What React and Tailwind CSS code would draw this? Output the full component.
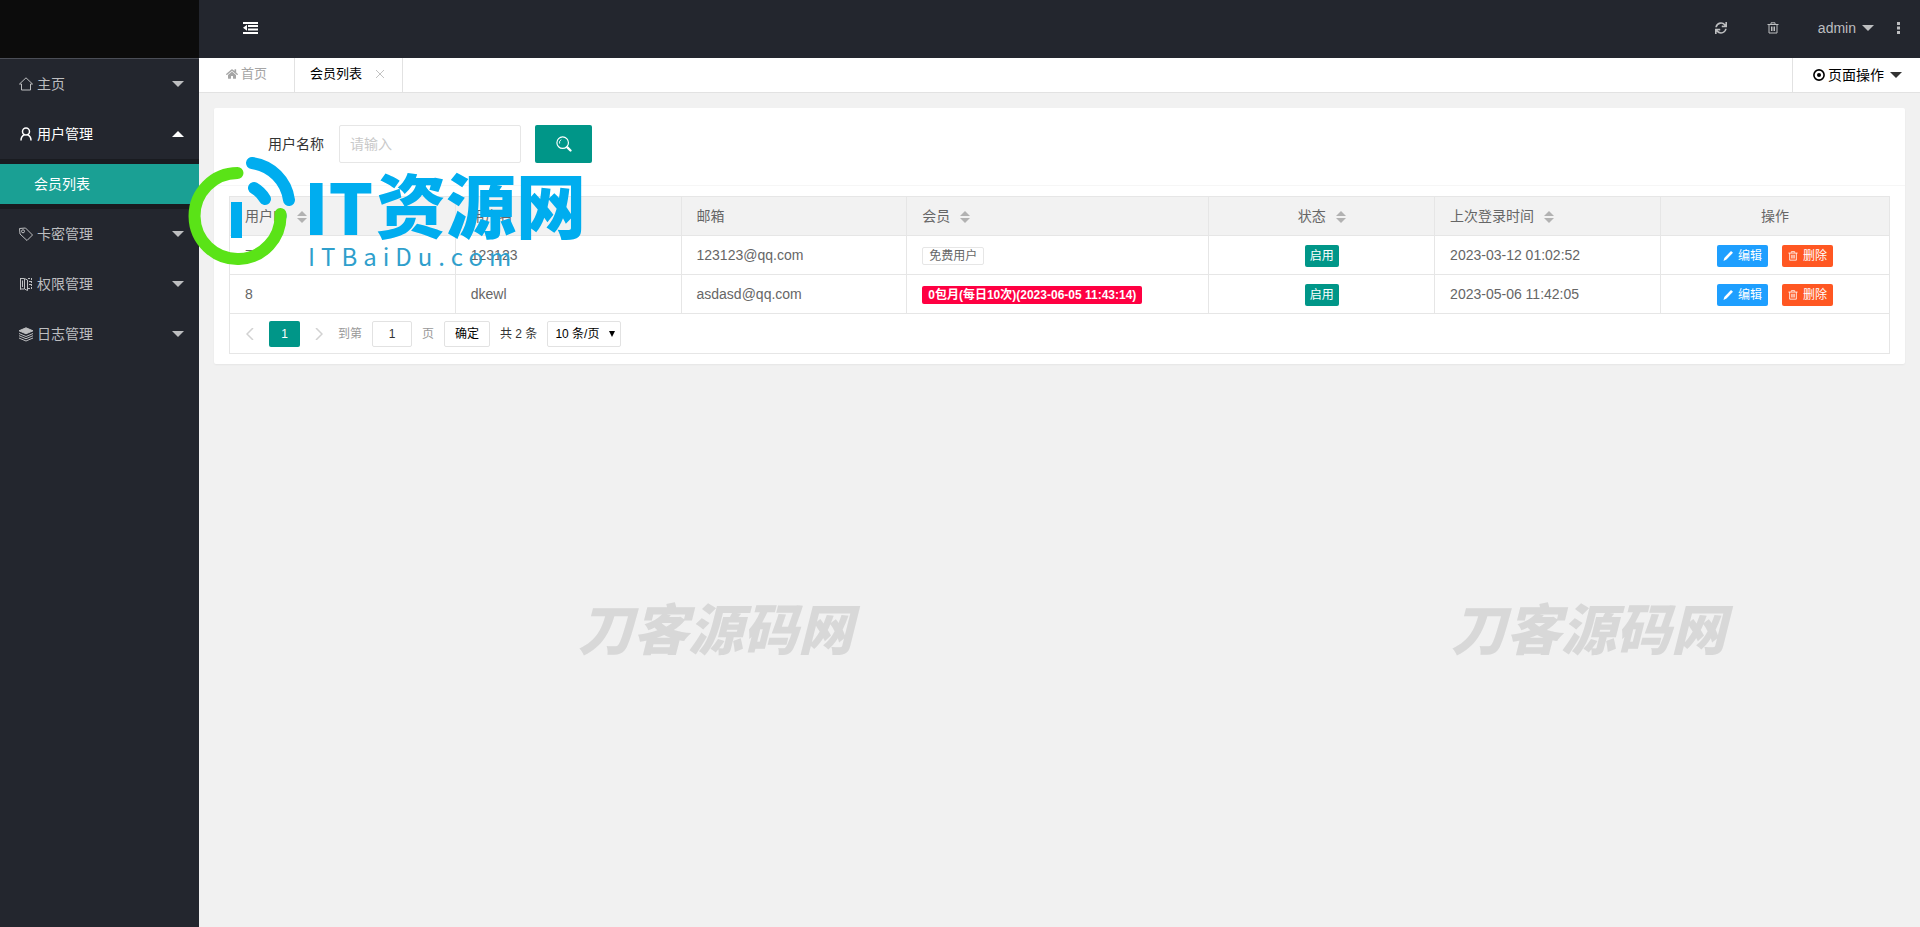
import { Fragment } from "react";
import { FaHome, FaSync } from "react-icons/fa";

const CaretDown = ({ className = "" }) => (
  <span className={`inline-block border-x-6 border-t-6 border-x-transparent ${className}`} />
);

// Icons

const HouseIcon = () => (
  <svg viewBox="0 0 16 16" className="size-4" fill="none" stroke="currentColor">
    <path d="M3.500 8H1.500L8 1.800 14.500 8h-2v6h-9V8" />
  </svg>
);

const UserIcon = () => (
  <svg viewBox="0 0 16 16" className="size-4" fill="none" stroke="currentColor" strokeWidth="1.500">
    <circle cx="8" cy="5.500" r="3.500" />
    <path d="M3 14.500c0-3 1.500-5 3.500-6M13 14.500c0-3-1.500-5-3.500-6" />
  </svg>
);

const TagIcon = () => (
  <svg viewBox="0 0 16 16" className="size-4" fill="none" stroke="currentColor" strokeLinejoin="round">
    <path d="M1.500 2.500 7.500 2 14.500 9 9 14.500 2 8Z" />
    <circle cx="5" cy="5.300" r="1.500" />
  </svg>
);

const BookIcon = () => (
  <svg viewBox="0 0 16 16" className="size-4" fill="none" stroke="currentColor">
    <path d="M2.500 2v11.500M2 2.500h4M2 13h4M6.500 2.500 9.500 4v10.500L6.500 13ZM4.500 4.500v6.500" />
    <path d="M10 2.500h4M11 5.500h3M11 8.500h3M10 12.500h4M13.500 2v11" strokeDasharray="2 1" />
  </svg>
);

const LayersIcon = () => (
  <svg viewBox="0 0 16 16" className="size-4" fill="none" stroke="currentColor">
    <path d="m8 1.800 7 3-7 3-7-3Z" fill="currentColor" />
    <path d="m1 7.500 7 3 7-3M1 9.700l7 3 7-3M1 12l7 3 7-3" />
  </svg>
);

const TrashIcon = ({ className = "size-3" }) => (
  <svg viewBox="0 0 12 12" className={className} fill="none" stroke="currentColor">
    <path d="M.5 2.500h11M4 2V.8h4V2M2 2.500v8.500h8V2.500M4.500 4.500v4.500M6 4.500v4.500M7.500 4.500v4.500" />
  </svg>
);

const MENU = [
  { title: "主页", icon: HouseIcon },
  { title: "用户管理", icon: UserIcon, children: ["会员列表"] },
  { title: "卡密管理", icon: TagIcon },
  { title: "权限管理", icon: BookIcon },
  { title: "日志管理", icon: LayersIcon },
];

const COLUMNS = [
  { title: "用户ID", sort: true, width: "w-[13.6%]" },
  { title: "用户名", width: "w-[13.6%]" },
  { title: "邮箱", width: "w-[13.6%]" },
  { title: "会员", sort: true, width: "w-[18.2%]" },
  { title: "状态", sort: true, center: true, width: "w-[13.6%]" },
  { title: "上次登录时间", sort: true, width: "w-[13.6%]" },
  { title: "操作", center: true, width: "w-[13.8%]" },
];

const USERS = [
  { id: 7, name: "123123", email: "123123@qq.com", vip: null, time: "2023-03-12 01:02:52" },
  { id: 8, name: "dkewl", email: "asdasd@qq.com", vip: "0包月(每日10次)(2023-06-05 11:43:14)", time: "2023-05-06 11:42:05" },
];

const Sidebar = () => (
  <aside className="w-[199px] shrink-0 bg-[#23262e] text-[#bdbec0]">
    <div className="h-[59px] border-b border-[#4b4e57] bg-[#0c0c0c]" />
    <nav>
      {MENU.map(({ title, icon: Icon, children }) => (
        <Fragment key={title}>
          <a
            href="#"
            className={`flex h-[50px] items-center pr-[15px] pl-[18px] ${children ? "text-white" : ""}`}
          >
            <Icon />
            <span className="ml-[3px] flex-1">{title}</span>
            <CaretDown className={children ? "rotate-180" : ""} />
          </a>
          {children && (
            <div className="bg-[#191b20] py-[5px]">
              {children.map((name) => (
                <a key={name} href="#" className="flex h-10 items-center bg-[#1aa094] pl-[34px] text-white">
                  {name}
                </a>
              ))}
            </div>
          )}
        </Fragment>
      ))}
    </nav>
  </aside>
);

const Header = () => (
  <header className="flex h-[58px] items-center bg-[#23262e] pb-[2px] text-[#bdbec0]">
    <button type="button" aria-label="收起菜单" className="ml-[43px] text-white">
      <svg viewBox="0 0 16 12" className="h-3 w-4" fill="currentColor">
        <path d="M1 0h15v2H1zM6 3h10v2H6zM6 6.500h10v2H6zM1 10h15v2H1zM1 5.800l4-3v6z" />
      </svg>
    </button>
    <div className="ml-auto flex items-center pr-[19px]">
      <button type="button" aria-label="刷新">
        <FaSync className="size-3" />
      </button>
      <button type="button" aria-label="清理缓存" className="ml-10">
        <TrashIcon />
      </button>
      <button type="button" className="ml-[39px] flex items-center gap-[6px]">
        admin
        <CaretDown />
      </button>
      <button type="button" aria-label="更多" className="ml-[23px]">
        <svg viewBox="0 0 4 12" className="h-3 w-1" fill="currentColor">
          <path d="M0 0h3v3H0zM0 4.500h3v3H0zM0 9h3v3H0z" />
        </svg>
      </button>
    </div>
  </header>
);

const TabBar = () => (
  <div className="flex h-[35px] border-b border-[#e2e2e2] bg-white text-black">
    <a href="#" className="flex w-24 items-center justify-center gap-[3px] border-r border-[#e2e2e2] pb-[2px] text-[13px] text-[#a5a5a5]">
      <FaHome className="size-3" />
      首页
    </a>
    <a href="#" className="flex items-center border-r border-[#e2e2e2] pr-[18px] pb-[2px] pl-[15px] text-[13px]">
      会员列表
      <svg viewBox="0 0 8 8" className="ml-[14px] size-2 text-[#c2c2c2]" stroke="currentColor">
        <path d="m0 0 8 8M8 0 0 8" />
      </svg>
    </a>
    <button type="button" className="ml-auto flex items-center border-l border-[#e2e2e2] pr-[18px] pl-5">
      <svg viewBox="0 0 12 12" className="mr-[3px] size-3" fill="none" stroke="currentColor" strokeWidth="1.600">
        <circle cx="6" cy="6" r="5.100" />
        <circle cx="6" cy="6" r="2" fill="currentColor" stroke="none" />
      </svg>
      页面操作
      <CaretDown className="ml-[6px] text-[#333]" />
    </button>
  </div>
);

const SearchForm = () => (
  <form className="flex h-[78px] items-center border-b border-[#f6f6f6] pb-[5px] pl-[54px] text-[#333]">
    <label htmlFor="username">用户名称</label>
    <input
      id="username"
      type="text"
      placeholder="请输入"
      className="ml-[15px] h-[38px] w-[182px] rounded-xs border border-[#e6e6e6] px-[10px] outline-none placeholder:text-[#c9c9c9]"
    />
    <button
      type="button"
      aria-label="搜索"
      className="ml-[14px] flex h-[38px] w-[57px] items-center justify-center rounded-xs bg-[#009688] text-white"
    >
      <svg viewBox="0 0 18 18" className="size-4" fill="none" stroke="currentColor" strokeWidth="1.300">
        <circle cx="7.500" cy="7.500" r="6.500" />
        <path d="M4 8.500a4 4 0 0 1 2-4.500" strokeWidth="1" />
        <path d="m12.800 12.800 3.500 3.500" strokeWidth="2.600" strokeLinecap="round" />
      </svg>
    </button>
  </form>
);

const SortArrows = () => (
  <span className="ml-[10px] inline-flex flex-col gap-[2px] align-middle text-[#b2b2b2]">
    <span className="border-x-5 border-b-5 border-x-transparent" />
    <span className="border-x-5 border-t-5 border-x-transparent" />
  </span>
);

const UserTable = () => (
  <table className="w-full table-fixed border-collapse text-[#666]">
    <thead>
      <tr className="h-[39px] bg-[#f2f2f2]">
        {COLUMNS.map((col) => (
          <th
            key={col.title}
            className={`border border-[#e6e6e6] px-[15px] font-normal ${col.width} ${col.center ? "text-center" : "text-left"}`}
          >
            {col.title}
            {col.sort && <SortArrows />}
          </th>
        ))}
      </tr>
    </thead>
    <tbody>
      {USERS.map((user) => (
        <tr key={user.id} className="h-[39px]">
          <td className="border border-[#e6e6e6] px-[15px]">{user.id}</td>
          <td className="border border-[#e6e6e6] px-[15px]">{user.name}</td>
          <td className="border border-[#e6e6e6] px-[15px]">{user.email}</td>
          <td className="border border-[#e6e6e6] px-[15px]">
            <div className="flex pt-[2px] text-xs">
              {user.vip ? (
                <span className="h-[18px] rounded-xs bg-[#ff0042] px-[6px] leading-[18px] font-bold text-white">{user.vip}</span>
              ) : (
                <span className="h-[18px] rounded-xs border border-[#e6e6e6] px-[6px] leading-4">免费用户</span>
              )}
            </div>
          </td>
          <td className="border border-[#e6e6e6] px-[15px]">
            <div className="flex justify-center pt-[2px]">
              <button type="button" className="h-[22px] rounded-xs bg-[#009688] px-[5px] text-xs text-white">启用</button>
            </div>
          </td>
          <td className="border border-[#e6e6e6] px-[15px]">{user.time}</td>
          <td className="border border-[#e6e6e6] px-[15px]">
            <div className="flex justify-center gap-[14px] pt-[2px] text-xs text-white">
              <button type="button" className="flex h-[22px] w-[51px] items-center justify-center gap-[5px] rounded-xs bg-[#1e9fff]">
                <svg viewBox="0 0 10 10" className="size-[10px]" fill="currentColor">
                  <path d="m8 0 2 1.700-6.500 6.800L.5 10l.8-3Z" />
                </svg>
                编辑
              </button>
              <button type="button" className="flex h-[22px] w-[51px] items-center justify-center gap-[5px] rounded-xs bg-[#ff5722]">
                <TrashIcon className="size-[10px]" />
                删除
              </button>
            </div>
          </td>
        </tr>
      ))}
    </tbody>
  </table>
);

const Pagination = () => (
  <div className="flex h-10 items-center border border-t-0 border-[#e6e6e6] pl-4 text-xs text-[#333]">
    <button type="button" aria-label="上一页" className="text-[#d2d2d2]">
      <svg viewBox="0 0 8 12" className="h-3 w-2" fill="none" stroke="currentColor" strokeWidth="1.500">
        <path d="M7 0 1 6l6 6" />
      </svg>
    </button>
    <button type="button" className="ml-[15px] h-[26px] w-[31px] rounded-xs bg-[#009688] text-white">1</button>
    <button type="button" aria-label="下一页" className="ml-[15px] text-[#d2d2d2]">
      <svg viewBox="0 0 8 12" className="h-3 w-2" fill="none" stroke="currentColor" strokeWidth="1.500">
        <path d="m1 0 6 6-6 6" />
      </svg>
    </button>
    <label className="ml-[15px] flex items-center gap-[10px] text-[#999]">
      到第
      <input type="text" defaultValue="1" className="h-[26px] w-10 rounded-xs border border-[#e2e2e2] text-center text-[#333]" />
      页
    </label>
    <button type="button" className="ml-[10px] h-[26px] w-[46px] rounded-xs border border-[#e2e2e2] text-black">确定</button>
    <span className="ml-[10px]">共 2 条</span>
    <div className="relative ml-[10px]">
      <select aria-label="每页条数" className="h-[26px] w-[74px] appearance-none rounded-xs border border-[#e2e2e2] bg-white pl-[7px] text-black">
        <option>10 条/页</option>
      </select>
      <span className="pointer-events-none absolute top-[10px] right-[6px] border-x-3 border-t-6 border-x-transparent border-t-black" />
    </div>
  </div>
);

const SiteLogo = () => (
  <svg
    viewBox="0 0 420 130"
    className="pointer-events-none absolute top-[155px] left-[188px] h-[130px] w-[420px] overflow-visible"
    fill="none"
    strokeLinecap="round"
    strokeWidth="12"
  >
    <path d="M49.500 18A43 43 0 1 0 92.500 59" stroke="#5ae317" />
    <path d="M64 8A43 43 0 0 1 101 45" stroke="#00adef" />
    <path d="M66 33q7 4 11 11" stroke="#00adef" />
    <path d="M43 47h11v36H43z" fill="#00adef" />
    <text y="80" fontWeight="900" fill="#00adef" className="font-['Noto_Sans_CJK_SC',sans-serif]">
      <tspan x="116" fontSize="70">IT</tspan>
      <tspan x="188" y="78" fontSize="70">资源网</tspan>
    </text>
    <text x="120" y="111" fontSize="24" fill="#2f9fcc" className="font-['Noto_Sans_CJK_SC',sans-serif] tracking-[6px]">
      ITBaiDu.com
    </text>
  </svg>
);

const Watermark = ({ className }) => (
  <div
    className={`pointer-events-none absolute font-['Noto_Sans_CJK_SC',sans-serif] text-[55px] leading-none font-black text-[#d8d8d8] italic ${className}`}
  >
    刀客源码网
  </div>
);

export default function App() {
  return (
    <div className="relative flex min-h-screen bg-[#f1f1f1] font-['Liberation_Sans','Noto_Sans_CJK_SC',sans-serif] text-sm">
      <Sidebar />
      <div className="min-w-0 flex-1">
        <Header />
        <TabBar />
        <main className="p-[15px]">
          <section className="rounded-xs bg-white shadow-xs">
            <SearchForm />
            <div className="p-[15px] pt-[10px] pb-[10px]">
              <UserTable />
              <Pagination />
            </div>
          </section>
        </main>
      </div>
      <SiteLogo />
      <Watermark className="top-[599px] left-[578px]" />
      <Watermark className="top-[599px] left-[1451px]" />
    </div>
  );
}
